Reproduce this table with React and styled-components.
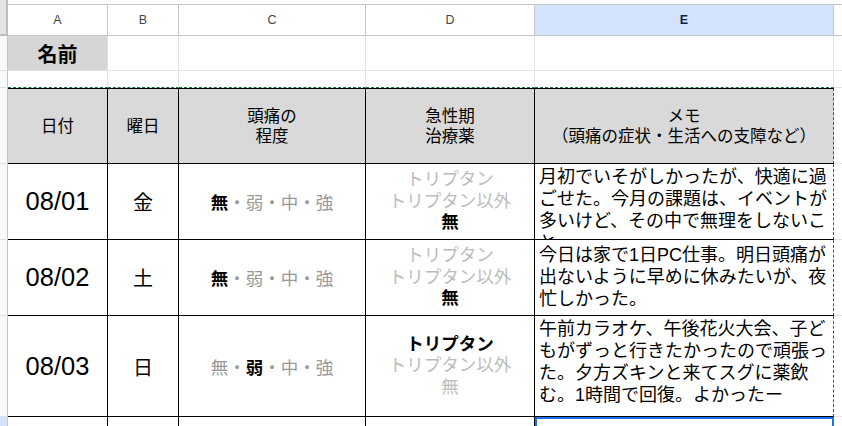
import React from "react";
import styled, { createGlobalStyle } from "styled-components";

const GlobalStyle = createGlobalStyle`
  html, body {
    margin: 0;
    padding: 0;
    background: #fff;
    overflow: hidden;
  }
  body {
    font-family: "Liberation Sans", "Noto Sans CJK JP", sans-serif;
    color: #000;
  }
`;

const columns = ["A", "B", "C", "D", "E"];
const levels = ["無", "弱", "中", "強"];
const meds = ["トリプタン", "トリプタン以外", "無"];

const data = [
  {
    date: "08/01",
    day: "金",
    level: 0,
    med: 2,
    memo: "月初でいそがしかったが、快適に過ごせた。今月の課題は、イベントが多いけど、その中で無理をしないこと。",
    align: "start",
  },
  {
    date: "08/02",
    day: "土",
    level: 0,
    med: 2,
    memo: "今日は家で1日PC仕事。明日頭痛が出ないように早めに休みたいが、夜忙しかった。",
    align: "end",
  },
  {
    date: "08/03",
    day: "日",
    level: 1,
    med: 0,
    memo: "午前カラオケ、午後花火大会、子どもがずっと行きたかったので頑張った。夕方ズキンと来てスグに薬飲む。1時間で回復。よかったー",
    align: "start",
  },
];

export default function App() {
  return (
    <>
      <GlobalStyle />
      <Sheet>
        <Corner />
        {columns.map((c) => (
          <ColHeader key={c} $active={c === "E"}>
            {c}
          </ColHeader>
        ))}
        <ColFiller />

        <RowNum />
        <NameCell>名前</NameCell>
        <Cell />
        <Cell />
        <Cell />
        <Cell />
        <Filler />

        <RowNum />
        <Cell $marquee />
        <Cell $marquee />
        <Cell $marquee />
        <Cell $marquee />
        <Cell $marquee />
        <Filler />

        <RowNum />
        <HeadCell>日付</HeadCell>
        <HeadCell>曜日</HeadCell>
        <HeadCell>
          頭痛の
          <br />
          程度
        </HeadCell>
        <HeadCell>
          急性期
          <br />
          治療薬
        </HeadCell>
        <HeadCell $last>
          メモ
          <br />
          （頭痛の症状・生活への支障など）
        </HeadCell>
        <Filler />

        {data.map((r) => (
          <React.Fragment key={r.date}>
            <RowNum />
            <DateCell>{r.date}</DateCell>
            <DayCell>{r.day}</DayCell>
            <LevelCell>
              {levels.map((l, i) => (
                <React.Fragment key={l}>
                  {i > 0 && <Dot>・</Dot>}
                  <Level $on={i === r.level}>{l}</Level>
                </React.Fragment>
              ))}
            </LevelCell>
            <MedCell>
              {meds.map((m, i) => (
                <Med key={m} $on={i === r.med}>
                  {m}
                </Med>
              ))}
            </MedCell>
            <MemoCell $align={r.align}>{r.memo}</MemoCell>
            <Filler />
          </React.Fragment>
        ))}

        <RowNum $active />
        <TableCell />
        <TableCell />
        <TableCell />
        <TableCell />
        <ActiveCell />
        <Filler />
      </Sheet>
    </>
  );
}

const Sheet = styled.div`
  display: grid;
  grid-template-columns: 8px 100px 71px 187px 169px 299px 1fr;
  grid-template-rows: 36px 35px 17px 76px 76px 76px 101px 40px;
  width: 842px;
  height: 426px;
  overflow: hidden;

  & > * {
    box-sizing: border-box;
    min-width: 0;
  }
`;

const Corner = styled.div`
  background: #e3e3e3;
  border-right: 2px solid #bdbdbd;
  border-bottom: 2px solid #bdbdbd;
`;

const ColHeader = styled.div`
  margin-top: 4px;
  display: flex;
  align-items: center;
  justify-content: center;
  background: ${(p) => (p.$active ? "#d3e3fd" : "#fff")};
  border-top: 1px solid #c4c7c5;
  border-right: 1px solid #c4c7c5;
  border-bottom: 1px solid #c4c7c5;
  color: ${(p) => (p.$active ? "#0b1f44" : "#444")};
  font-weight: ${(p) => (p.$active ? 700 : 400)};
  font-size: 12.5px;
`;

const ColFiller = styled.div`
  margin-top: 4px;
  border-top: 1px solid #c4c7c5;
  border-bottom: 1px solid #c4c7c5;
`;

const RowNum = styled.div`
  background: ${(p) => (p.$active ? "#d3e3fd" : "#f8f9fa")};
  border-right: 1px solid #c4c7c5;
  border-bottom: 1px solid #e1e1e1;
`;

const Cell = styled.div`
  border-right: 1px solid #e2e2e2;
  border-bottom: ${(p) => (p.$marquee ? "1px dashed #1e6b3c" : "1px solid #e2e2e2")};
`;

const Filler = styled.div`
  border-bottom: 1px solid #e2e2e2;
`;

const NameCell = styled(Cell)`
  display: flex;
  align-items: center;
  justify-content: center;
  background: #d6d6d6;
  font-size: 20px;
  font-weight: 700;
`;

const TableCell = styled.div`
  border-right: 1px solid #000;
  border-bottom: 1px solid #000;
  overflow: hidden;
`;

const HeadCell = styled(TableCell)`
  display: flex;
  align-items: center;
  justify-content: center;
  text-align: center;
  background: #d9d9d9;
  border-top: 1px solid #000;
  border-right: ${(p) => (p.$last ? "1px dashed #1e6b3c" : "1px solid #000")};
  font-size: 16.5px;
  line-height: 20px;
`;

const Centered = styled(TableCell)`
  display: flex;
  align-items: center;
  justify-content: center;
`;

const DateCell = styled(Centered)`
  font-size: 25.5px;
`;

const DayCell = styled(Centered)`
  font-size: 20px;
`;

const LevelCell = styled(Centered)`
  font-size: 17.5px;
  white-space: nowrap;
`;

const Dot = styled.span`
  color: #999;
`;

const Level = styled.span`
  color: ${(p) => (p.$on ? "#000" : "#999")};
  font-weight: ${(p) => (p.$on ? 700 : 400)};
`;

const MedCell = styled(Centered)`
  flex-direction: column;
  font-size: 17.5px;
  line-height: 21.5px;
`;

const Med = styled.div`
  color: ${(p) => (p.$on ? "#000" : "#bcbcbc")};
  font-weight: ${(p) => (p.$on ? 700 : 400)};
`;

const MemoCell = styled(TableCell)`
  display: flex;
  align-items: ${(p) => (p.$align === "end" ? "flex-end" : "flex-start")};
  border-right: 1px dashed #1e6b3c;
  padding: ${(p) => (p.$align === "end" ? "0 3px 5px 4px" : "2px 3px 0 4px")};
  font-size: 18px;
  line-height: 22px;
`;

const ActiveCell = styled.div`
  border: 2px solid #1a73e8;
  border-bottom: none;
`;
